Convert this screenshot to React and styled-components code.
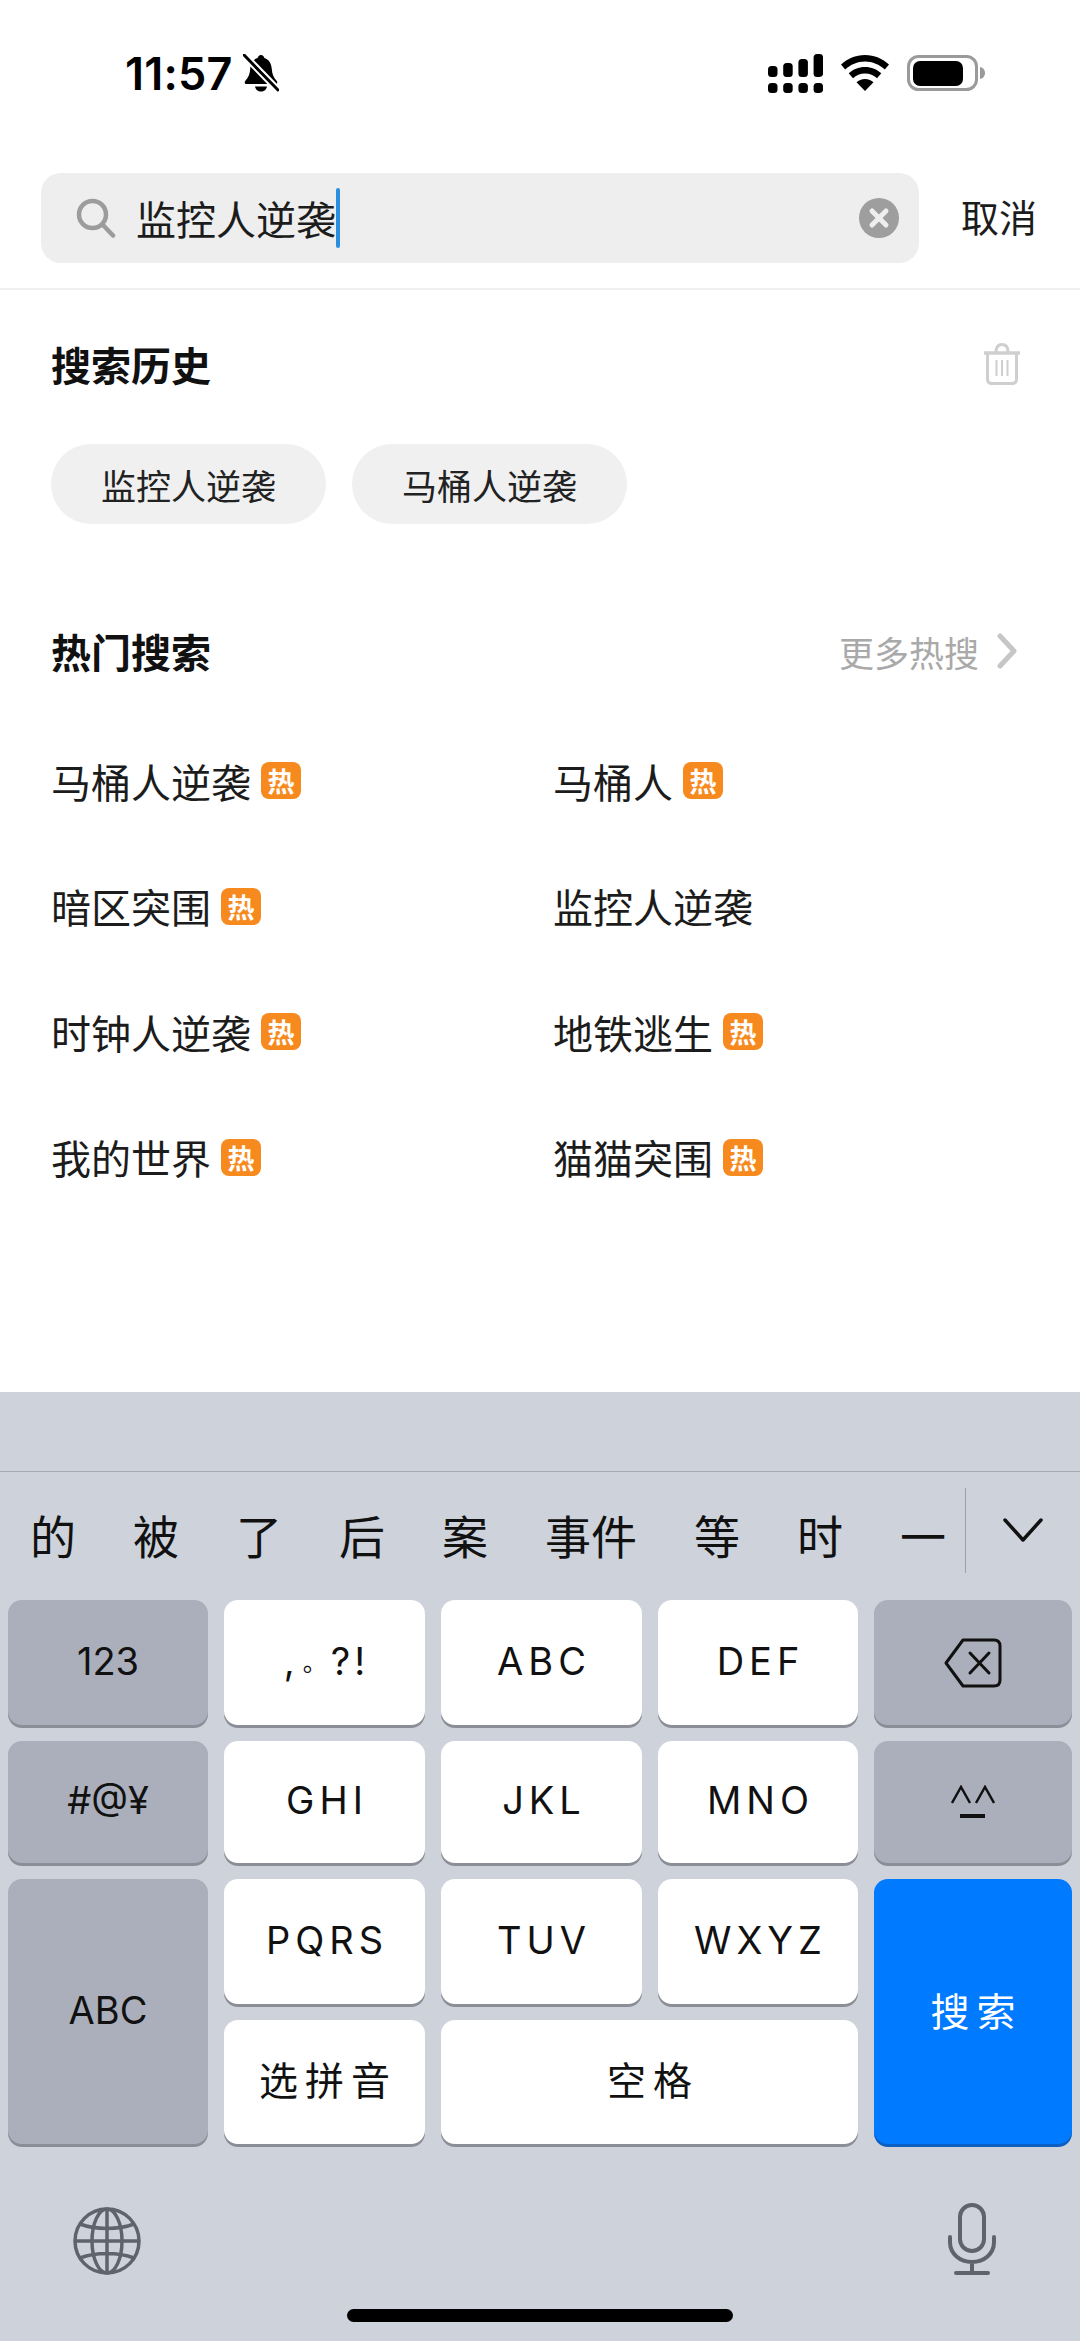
import styled, { createGlobalStyle } from "styled-components";

const CJK = `"Noto Sans CJK SC", "Noto Sans", sans-serif`;
const LATIN = `Inter, "Noto Sans CJK SC", sans-serif`;

const Global = createGlobalStyle`
  html, body {
    margin: 0;
    padding: 0;
    background: #fff;
  }
  * {
    box-sizing: border-box;
  }
`;

const Screen = styled.div`
  width: 1080px;
  height: 2341px;
  display: flex;
  flex-direction: column;
  overflow: hidden;
  background: #fff;
  font-family: ${CJK};
  color: #111;
`;

const StatusBar = styled.div`
  height: 173px;
  padding: 49px 94px 0 125px;
  display: flex;
  justify-content: space-between;
  align-items: flex-start;
`;

const TimeGroup = styled.div`
  display: flex;
  align-items: center;
  gap: 10px;
  height: 48px;
`;

const Time = styled.span`
  padding-top: 2px;
  font-family: ${LATIN};
  font-size: 45px;
  line-height: 48px;
  font-weight: 600;
  letter-spacing: 0.2px;
  color: #000;
`;

const StatusIcons = styled.div`
  display: flex;
  align-items: center;
  gap: 18px;
  height: 48px;
`;

const SearchRow = styled.div`
  display: flex;
  align-items: center;
  justify-content: space-between;
  padding: 0 43px 25px 41px;
  border-bottom: 2px solid #efefef;
`;

const SearchBox = styled.div`
  width: 878px;
  height: 90px;
  padding: 0 20px 0 35px;
  display: flex;
  align-items: center;
  background: #eeeeee;
  border-radius: 20px;
`;

const SearchText = styled.span`
  margin-left: 20px;
  font-size: 40px;
  line-height: 60px;
  color: #1c1c1c;
`;

const Caret = styled.span`
  width: 4px;
  height: 60px;
  border-radius: 2px;
  background: #2b8fe0;
`;

const Clear = styled.svg`
  margin-left: auto;
`;

const Cancel = styled.span`
  margin-bottom: 6px;
  font-size: 38px;
  color: #1c1c1c;
`;

const Content = styled.main`
  flex: 1;
  padding: 44px 59px 0 51px;
`;

const SectionHead = styled.div`
  height: 60px;
  margin-top: ${(p) => p.$top || 0}px;
  display: flex;
  align-items: center;
  justify-content: space-between;
`;

const SectionTitle = styled.h2`
  margin: 0;
  font-size: 40px;
  font-weight: 700;
  color: #111;
`;

const Chips = styled.div`
  display: flex;
  gap: 26px;
  margin-top: 50px;
`;

const Chip = styled.span`
  width: 275px;
  height: 80px;
  display: flex;
  align-items: center;
  justify-content: center;
  border-radius: 40px;
  background: #f0f0f0;
  font-size: 35px;
  color: #222;
`;

const More = styled.div`
  display: flex;
  align-items: center;
  gap: 18px;
  margin-right: 3px;
  font-size: 35px;
  color: #a9a9a9;
`;

const HotGrid = styled.div`
  display: grid;
  grid-template-columns: 502px 1fr;
  grid-auto-rows: 125.5px;
  margin-top: 37px;
`;

const HotItem = styled.div`
  display: flex;
  align-items: center;
  gap: 10px;
  font-size: 40px;
  color: #1c1c1c;
`;

const HotBadge = styled.span`
  width: 40px;
  height: 37px;
  display: flex;
  align-items: center;
  justify-content: center;
  border-radius: 8px;
  background: #f78a1f;
  color: #fff;
  font-size: 27px;
  font-weight: 700;
`;

const Keyboard = styled.section`
  height: 949px;
  background: #ced2db;
`;

const KeyboardTop = styled.div`
  height: 80px;
  border-bottom: 1px solid #a5a9b1;
`;

const Candidates = styled.div`
  height: 128px;
  padding-left: 30px;
  display: flex;
  align-items: center;
  font-size: 46px;
  color: #111;
`;

const CandidateList = styled.div`
  flex: 1;
  display: flex;
  gap: 57px;
`;

const Candidate = styled.span`
  flex: none;
  white-space: nowrap;
  line-height: 56px;
  margin-top: -4px;
`;

const CandidateToggle = styled.div`
  flex: 0 0 115px;
  height: 85px;
  margin-top: -12px;
  display: flex;
  align-items: center;
  justify-content: center;
  border-left: 1px solid #9a9ea6;
`;

const Keys = styled.div`
  display: grid;
  grid-template-columns: 200px 201px 201px 200px 198px;
  grid-template-rows: 125px 122px 125px 124px;
  gap: 16px;
  padding: 0 8px;
`;

const toneBg = { light: "#fff", dark: "#abafbb", blue: "#007aff" };

const Key = styled.div`
  grid-column: ${(p) => p.$col || "auto"};
  grid-row: ${(p) => p.$row || "auto"};
  display: flex;
  align-items: center;
  justify-content: center;
  padding-bottom: ${(p) => p.$lift ?? 4}px;
  border-radius: 14px;
  background: ${(p) => toneBg[p.$tone || "light"]};
  box-shadow: 0 3px 0 ${(p) => (p.$tone === "blue" ? "#0a5fc0" : "#8b8e96")};
  color: ${(p) => (p.$tone === "blue" ? "#fff" : "#111")};
  font-family: ${LATIN};
  font-size: ${(p) => p.$size || 38}px;
  letter-spacing: ${(p) => p.$spacing || 0}px;
  text-indent: ${(p) => p.$spacing || 0}px;
`;

const Dot = styled.span`
  font-family: ${CJK};
  font-size: 24px;
  letter-spacing: 0;
`;

const KeyboardBottom = styled.div`
  display: flex;
  flex-direction: column;
  align-items: center;
  padding-top: 59px;
`;

const BottomIcons = styled.div`
  width: 100%;
  padding: 0 84px 0 73px;
  display: flex;
  justify-content: space-between;
  align-items: flex-end;
`;

const HomeBar = styled.div`
  width: 386px;
  height: 13px;
  margin-top: 34px;
  border-radius: 7px;
  background: #000;
`;

const BellOff = () => (
  <svg width="36" height="38" viewBox="0 0 36 38">
    <path
      d="M18 1c2 0 3 1.500 3.400 3 5 1.500 7 6 7.400 11 .4 5 1.600 8 5 12 1 1.500.4 3-1.600 3H3.800c-2 0-2.600-1.500-1.600-3 3.400-4 4.600-7 5-12 .4-5 2.400-9.500 7.400-11C15 2.500 16 1 18 1z"
      fill="#000"
    />
    <path d="M12 32.500h12c-.5 3-3 5-6 5s-5.500-2-6-5z" fill="#000" />
    <path d="M2 2l32 33" stroke="#fff" strokeWidth="7" />
    <path d="M1 1l34 35" stroke="#000" strokeWidth="3" strokeLinecap="round" />
  </svg>
);

const signalTops = [12, 9, 5, 0];

const Signal = () => (
  <svg width="55" height="39" viewBox="0 0 55 39">
    {signalTops.map((top, i) => (
      <g key={i} fill="#000">
        <rect x={i * 15.2} y={top} width="9.500" height={23 - top} rx="3.500" />
        <rect x={i * 15.2} y="29" width="9.500" height="10" rx="3.500" />
      </g>
    ))}
  </svg>
);

const Wifi = () => (
  <svg width="48" height="36" viewBox="0 0 48 36">
    <path
      d="M24 0C14.500 0 6.500 3.600 0 9.500l4.200 5C9.500 9.600 16.500 6.500 24 6.500s14.500 3.100 19.800 8l4.200-5C41.500 3.600 33.500 0 24 0z"
      fill="#000"
    />
    <path
      d="M24 12c-6.500 0-12 2.400-16.300 6.300l4.300 5c3.200-2.900 7.300-4.700 12-4.700s8.800 1.800 12 4.700l4.300-5C36 14.400 30.500 12 24 12z"
      fill="#000"
    />
    <path d="M24 24c-3.500 0-6.300 1.300-8.500 3.300L24 36l8.500-8.700C30.300 25.300 27.500 24 24 24z" fill="#000" />
  </svg>
);

const Battery = () => (
  <svg width="79" height="36" viewBox="0 0 79 36">
    <rect x="1.500" y="1.500" width="68" height="33" rx="10" fill="none" stroke="#9a9a9a" strokeWidth="3" />
    <rect x="6" y="6" width="50" height="25" rx="7" fill="#000" />
    <path d="M73 12c3 .5 5 3 5 6s-2 5.500-5 6z" fill="#9a9a9a" />
  </svg>
);

const SearchIcon = () => (
  <svg width="40" height="40" viewBox="0 0 40 40" fill="none" stroke="#9c9c9c" strokeWidth="4.500" strokeLinecap="round">
    <circle cx="16.500" cy="16.500" r="13.500" />
    <path d="M27 27l10 10.500" />
  </svg>
);

const TrashIcon = () => (
  <svg width="38" height="42" viewBox="0 0 38 42" fill="none" stroke="#cfcfcf" strokeWidth="3">
    <path d="M1 10h36" strokeWidth="3.500" />
    <path d="M13 9c0-5 2-7.500 6-7.500s6 2.500 6 7.500" />
    <path d="M4.500 10v26c0 3 1.500 4.500 4.500 4.500h20c3 0 4.500-1.500 4.500-4.500V10" />
    <path d="M13.500 17v16M19 17v16M24.500 17v16" strokeWidth="2" />
  </svg>
);

const Chevron = () => (
  <svg width="21" height="36" viewBox="0 0 21 36" fill="none" stroke="#c6c6c6" strokeWidth="5" strokeLinecap="round" strokeLinejoin="round">
    <path d="M3 3l14 15L3 33" />
  </svg>
);

const CandidateChevron = () => (
  <svg width="40" height="24" viewBox="0 0 40 24" fill="none" stroke="#111" strokeWidth="3.500" strokeLinecap="round" strokeLinejoin="round">
    <path d="M2 2l18 20L38 2" />
  </svg>
);

const BackspaceIcon = () => (
  <svg width="58" height="50" viewBox="0 0 58 50" fill="none" stroke="#111" strokeWidth="3" strokeLinecap="round" strokeLinejoin="round">
    <path d="M19 2h31c4 0 6 2 6 6v34c0 4-2 6-6 6H19L2 25z" />
    <path d="M26 15l19 20M45 15L26 35" />
  </svg>
);

const EmoticonIcon = () => (
  <svg width="44" height="34" viewBox="0 0 44 34" fill="none" stroke="#111" strokeWidth="2.500">
    <path d="M1 18L10 2l9 16M25 18l9-16 9 16" />
    <path d="M9 31h25" strokeWidth="4" />
  </svg>
);

const GlobeIcon = () => (
  <svg width="68" height="68" viewBox="0 0 68 68" fill="none" stroke="#5f636b" strokeWidth="3.500">
    <circle cx="34" cy="34" r="32" />
    <ellipse cx="34" cy="34" rx="15" ry="32" />
    <path d="M34 2v64M2 34h64M7 17c8 3 17 4.500 27 4.500S53 20 61 17M7 51c8-3 17-4.500 27-4.500S53 48 61 51" />
  </svg>
);

const MicIcon = () => (
  <svg width="48" height="72" viewBox="0 0 48 72" fill="none" stroke="#5f636b" strokeWidth="4" strokeLinecap="round">
    <rect x="12" y="2" width="24" height="46" rx="12" />
    <path d="M2 34v5c0 12 10 20 22 20s22-8 22-20v-5M24 59v11M8 70h32" />
  </svg>
);

const hotItems = [
  { name: "马桶人逆袭", hot: true },
  { name: "马桶人", hot: true },
  { name: "暗区突围", hot: true },
  { name: "监控人逆袭", hot: false },
  { name: "时钟人逆袭", hot: true },
  { name: "地铁逃生", hot: true },
  { name: "我的世界", hot: true },
  { name: "猫猫突围", hot: true },
];

const candidates = ["的", "被", "了", "后", "案", "事件", "等", "时", "一"];

const App = () => {
  return (
    <>
      <Global />
      <Screen>
        <StatusBar>
          <TimeGroup>
            <Time>11:57</Time>
            <BellOff />
          </TimeGroup>
          <StatusIcons>
            <Signal />
            <Wifi />
            <Battery />
          </StatusIcons>
        </StatusBar>

        <SearchRow>
          <SearchBox>
            <SearchIcon />
            <SearchText>监控人逆袭</SearchText>
            <Caret />
            <Clear width="40" height="40" viewBox="0 0 40 40">
              <circle cx="20" cy="20" r="20" fill="#9e9e9e" />
              <path d="M13 13l14 14M27 13L13 27" stroke="#eee" strokeWidth="5" strokeLinecap="round" />
            </Clear>
          </SearchBox>
          <Cancel>取消</Cancel>
        </SearchRow>

        <Content>
          <SectionHead>
            <SectionTitle>搜索历史</SectionTitle>
            <TrashIcon />
          </SectionHead>
          <Chips>
            <Chip>监控人逆袭</Chip>
            <Chip>马桶人逆袭</Chip>
          </Chips>

          <SectionHead $top={97}>
            <SectionTitle>热门搜索</SectionTitle>
            <More>
              更多热搜
              <Chevron />
            </More>
          </SectionHead>
          <HotGrid>
            {hotItems.map((item) => (
              <HotItem key={item.name}>
                {item.name}
                {item.hot && <HotBadge>热</HotBadge>}
              </HotItem>
            ))}
          </HotGrid>
        </Content>

        <Keyboard>
          <KeyboardTop />
          <Candidates>
            <CandidateList>
              {candidates.map((c) => (
                <Candidate key={c}>{c}</Candidate>
              ))}
            </CandidateList>
            <CandidateToggle>
              <CandidateChevron />
            </CandidateToggle>
          </Candidates>
          <Keys>
            <Key $tone="dark">123</Key>
            <Key $spacing={4}>
              ,<Dot>。</Dot>?!
            </Key>
            <Key $spacing={5}>ABC</Key>
            <Key $spacing={5}>DEF</Key>
            <Key $tone="dark" $lift={0} $spacing={0}>
              <BackspaceIcon />
            </Key>

            <Key $tone="dark">#@¥</Key>
            <Key $spacing={5}>GHI</Key>
            <Key $spacing={5}>JKL</Key>
            <Key $spacing={5}>MNO</Key>
            <Key $tone="dark" $lift={0}>
              <EmoticonIcon />
            </Key>

            <Key $tone="dark" $row="3 / span 2" $col="1">
              ABC
            </Key>
            <Key $row="3" $col="2" $spacing={5}>
              PQRS
            </Key>
            <Key $row="3" $col="3" $spacing={5}>
              TUV
            </Key>
            <Key $row="3" $col="4" $spacing={5}>
              WXYZ
            </Key>
            <Key $tone="blue" $row="3 / span 2" $col="5" $spacing={7} $size={39} $lift={5}>
              搜索
            </Key>
            <Key $row="4" $col="2" $spacing={7} $size={39} $lift={8}>
              选拼音
            </Key>
            <Key $row="4" $col="3 / span 2" $spacing={7} $size={39} $lift={8}>
              空格
            </Key>
          </Keys>
          <KeyboardBottom>
            <BottomIcons>
              <GlobeIcon />
              <MicIcon />
            </BottomIcons>
            <HomeBar />
          </KeyboardBottom>
        </Keyboard>
      </Screen>
    </>
  );
};

export default App;
